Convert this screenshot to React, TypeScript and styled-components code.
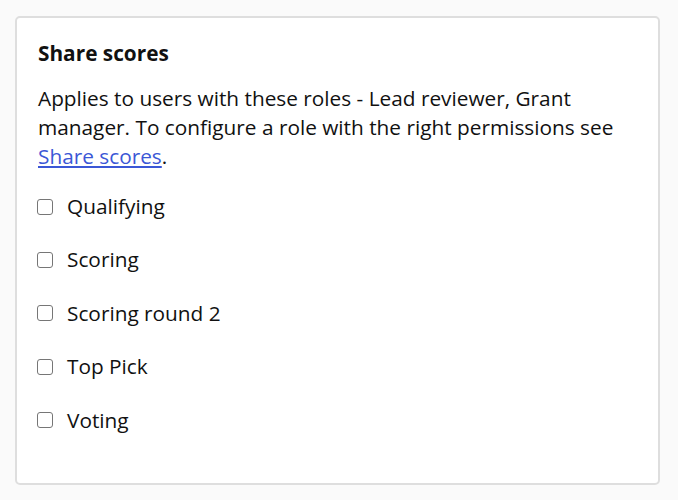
import React from "react";
import styled, { createGlobalStyle } from "styled-components";

const GlobalStyle = createGlobalStyle`
  html, body {
    margin: 0;
    padding: 0;
    background: #fafafa;
  }
  body {
    font-family: "Open Sans", "Liberation Sans", sans-serif;
    color: #111111;
  }
`;

const Page = styled.div`
  padding: 16px 18px 16px 15px;
`;

const Card = styled.section`
  background: #ffffff;
  border: 2px solid #dedede;
  border-radius: 5px;
  padding: 21px 21px 48px 21px;
`;

const Title = styled.h2`
  margin: 0;
  font-size: 20.8px;
  line-height: 29px;
  font-weight: 700;
`;

const Description = styled.p`
  margin: 16px 0 21px;
  font-size: 20.8px;
  line-height: 29px;
`;

const Link = styled.a`
  color: #3b57d6;
  text-decoration: underline;
  text-underline-offset: 2px;
`;

const List = styled.div`
  display: flex;
  flex-direction: column;
  gap: 24.4px;
`;

const Option = styled.label`
  display: flex;
  align-items: center;
  gap: 14px;
  font-size: 20.8px;
  line-height: 29px;
  cursor: pointer;
`;

const Box = styled.input`
  appearance: none;
  margin: 0 0 0 -1px;
  width: 16px;
  height: 16px;
  border: 1.5px solid #767676;
  border-radius: 3px;
  background: #fff;
  flex: none;
`;

const options = ["Qualifying", "Scoring", "Scoring round 2", "Top Pick", "Voting"];

export default function App() {
  return (
    <>
      <GlobalStyle />
      <Page>
        <Card>
          <Title>Share scores</Title>
          <Description>
            Applies to users with these roles - Lead reviewer, Grant manager. To configure a
            role with the right permissions see <Link href="#">Share scores</Link>.
          </Description>
          <List>
            {options.map((o) => (
              <Option key={o}>
                <Box type="checkbox" />
                {o}
              </Option>
            ))}
          </List>
        </Card>
      </Page>
    </>
  );
}
